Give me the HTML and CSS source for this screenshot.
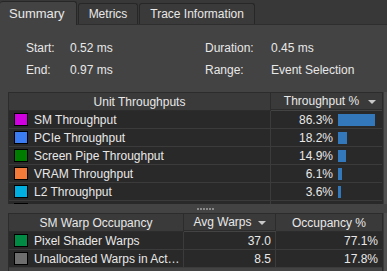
FILE: index.html
```html
<!DOCTYPE html>
<html>
<head>
<meta charset="utf-8">
<link rel="stylesheet" href="styles.css">
</head>
<body>
<div class="tabbar">
  <div class="tab active">Summary</div>
  <div class="tab">Metrics</div>
  <div class="tab">Trace Information</div>
</div>
<div class="panel">
  <div class="info">
    <span class="lbl">Start:</span><span class="val">0.52 ms</span>
    <span class="lbl lbl2">Duration:</span><span class="val">0.45 ms</span>
    <span class="lbl">End:</span><span class="val">0.97 ms</span>
    <span class="lbl lbl2">Range:</span><span class="val">Event Selection</span>
  </div>

  <div class="grid-wrap t1">
    <div class="grid g1">
      <div class="hd center">Unit Throughputs</div>
      <div class="hd center sorted">Throughput %<span class="arrow"></span></div>

      <div class="cell name"><span class="sw" style="background:#d000e0"></span>SM Throughput</div>
      <div class="cell num"><span class="pct">86.3%</span><span class="barbox"><span class="bar" style="width:37px"></span></span></div>

      <div class="cell name"><span class="sw" style="background:#3b7cf2"></span>PCIe Throughput</div>
      <div class="cell num"><span class="pct">18.2%</span><span class="barbox"><span class="bar" style="width:9px"></span></span></div>

      <div class="cell name"><span class="sw" style="background:#007c00"></span>Screen Pipe Throughput</div>
      <div class="cell num"><span class="pct">14.9%</span><span class="barbox"><span class="bar" style="width:8px"></span></span></div>

      <div class="cell name"><span class="sw" style="background:#f47a3a"></span>VRAM Throughput</div>
      <div class="cell num"><span class="pct">6.1%</span><span class="barbox"><span class="bar" style="width:4px"></span></span></div>

      <div class="cell name"><span class="sw" style="background:#00aee0"></span>L2 Throughput</div>
      <div class="cell num"><span class="pct">3.6%</span><span class="barbox"><span class="bar" style="width:3px"></span></span></div>

      <div class="cell name"><span class="sw" style="background:#202020"></span>&nbsp;</div>
      <div class="cell num"></div>
    </div>
    <div class="vscroll"></div>
  </div>

  <div class="splitter"><span class="dots"></span></div>

  <div class="grid-wrap t2">
    <div class="grid g2">
      <div class="hd center">SM Warp Occupancy</div>
      <div class="hd center sorted">Avg Warps<span class="arrow"></span></div>
      <div class="hd center">Occupancy %</div>

      <div class="cell name"><span class="sw" style="background:#008a44"></span>Pixel Shader Warps</div>
      <div class="cell right">37.0</div>
      <div class="cell right">77.1%</div>

      <div class="cell name"><span class="sw" style="background:#6e6e6e"></span>Unallocated Warps in Act…</div>
      <div class="cell right">8.5</div>
      <div class="cell right">17.8%</div>
    </div>
    <div class="vscroll"></div>
  </div>
</div>
</body>
</html>
```

FILE: styles.css
```css
html, body {
  margin: 0;
  padding: 0;
}
body {
  width: 387px;
  height: 271px;
  overflow: hidden;
  background: #434343;
  color: #e8e8e8;
  font-family: "Liberation Sans", Arial, sans-serif;
  font-size: 12px;
}
.tabbar {
  height: 25px;
  background: #383838;
  display: flex;
  align-items: flex-end;
  gap: 1px;
  border-bottom: 1px solid #2e2e2e;
  box-sizing: border-box;
}
.tab {
  height: 21px;
  box-sizing: border-box;
  padding: 0 10px;
  border: 1px solid #272727;
  border-bottom: none;
  border-radius: 3px 3px 0 0;
  background: #3a3a3a;
  display: flex;
  align-items: center;
  font-size: 12px;
}
.tab.active {
  height: 24px;
  background: #434343;
  margin-bottom: -1px;
  padding: 0 11px 0 9px;
  font-size: 13px;
  border-left: none;
}
.panel {
  padding-top: 16px;
}
.info {
  display: grid;
  grid-template-columns: 44px 135px 66px auto;
  row-gap: 7px;
  padding-left: 26px;
  line-height: 15px;
  font-size: 12px;
}
.grid-wrap {
  display: flex;
  margin-left: 8px;
}
.t1 {
  margin-top: 14px;
  height: 112px;
  overflow: hidden;
}
.grid {
  display: grid;
  border-top: 1px solid #2c2c2c;
  border-left: 1px solid #2c2c2c;
  border-right: 1px solid #2a2a2a;
  align-content: start;
}
.g1 {
  grid-template-columns: 262px 111px;
}
.g2 {
  grid-template-columns: 175px 92px 106px;
}
.vscroll {
  width: 4px;
  background: #505050;
  border-left: 1px solid #3a3a3a;
}
.hd {
  height: 17px;
  background: #3a3a3a;
  border-right: 1px solid #2c2c2c;
  border-bottom: 1px solid #2c2c2c;
  display: flex;
  align-items: center;
  font-size: 12px;
  position: relative;
}
.g1 .hd:nth-child(2), .g2 .hd:nth-child(3) {
  border-right: none;
}
.center {
  justify-content: center;
}
.arrow {
  position: absolute;
  right: 6px;
  top: 7px;
  width: 0;
  height: 0;
  border-left: 4px solid transparent;
  border-right: 4px solid transparent;
  border-top: 4px solid #c8c8c8;
}
.g2 .arrow {
  right: 9px;
}
.g1 .sorted {
  padding-right: 10px;
  box-sizing: border-box;
}
.g2 .sorted {
  padding-right: 14px;
  box-sizing: border-box;
}
.cell {
  height: 17px;
  background: #292929;
  border-bottom: 1px solid #3b3b3b;
  border-right: 1px solid #3b3b3b;
  display: flex;
  align-items: center;
  font-size: 12px;
  white-space: nowrap;
  overflow: hidden;
}
.g1 .cell:nth-child(2n), .g2 .cell:nth-child(3n) {
  border-right: none;
}
.name {
  padding-left: 5px;
}
.sw {
  width: 12px;
  height: 11px;
  border: 1px solid #000;
  margin-right: 6px;
  flex: none;
}
.num {
  justify-content: flex-end;
}
.pct {
  margin-right: 5px;
}
.barbox {
  width: 44px;
  height: 12px;
  display: flex;
}
.bar {
  height: 12px;
  background: #3478bc;
}
.right {
  justify-content: flex-end;
  padding-right: 4px;
}
.splitter {
  height: 9px;
  display: flex;
  justify-content: center;
  align-items: center;
}
.dots {
  width: 17px;
  height: 2px;
  margin-left: 23px;
  background: repeating-linear-gradient(90deg, #8a8a8a 0 2px, transparent 2px 3px);
}
.t2 {
  height: 60px;
}
```
